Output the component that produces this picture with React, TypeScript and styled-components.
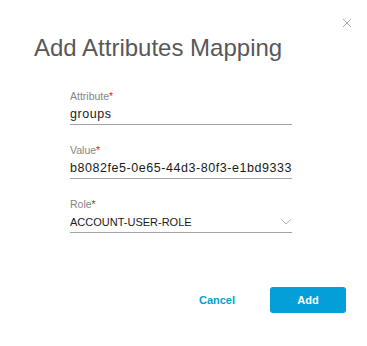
import { FC } from 'react'

import { createGlobalStyle, styled } from 'styled-components'

const GlobalStyle = createGlobalStyle`
  html, body {
    margin: 0;
    padding: 0;
    background: #fff;
  }

  body {
    font-family: 'Liberation Sans', Arial, sans-serif;
  }
`

type FieldProps = {
  label: string
  value: string
  select?: boolean
}

const Field: FC<FieldProps> = ({ label, value, select }) => {
  return (
    <StyledField>
      <StyledLabel>
        {label}
        <StyledRequired>*</StyledRequired>
      </StyledLabel>

      <StyledControl>
        <StyledInput value={value} readOnly $caps={select} />
        {select && (
          <StyledChevron viewBox="0 0 10 6" aria-hidden="true">
            <polyline points="0.5,0.5 5,5 9.5,0.5" />
          </StyledChevron>
        )}
      </StyledControl>
    </StyledField>
  )
}

const App: FC = () => {
  return (
    <>
      <GlobalStyle />
      <StyledDialog>
        <StyledClose type="button" aria-label="Close">
          <svg viewBox="0 0 8 8" width="8" height="8">
            <path d="M0 0 L8 8 M8 0 L0 8" />
          </svg>
        </StyledClose>

        <StyledTitle>Add Attributes Mapping</StyledTitle>

        <StyledForm>
          <Field label="Attribute" value="groups" />
          <Field label="Value" value="b8082fe5-0e65-44d3-80f3-e1bd93330e5a" />
          <Field label="Role" value="ACCOUNT-USER-ROLE" select />
        </StyledForm>

        <StyledFooter>
          <StyledButton type="button">Cancel</StyledButton>
          <StyledButton type="button" $primary>
            Add
          </StyledButton>
        </StyledFooter>
      </StyledDialog>
    </>
  )
}

export default App

const StyledDialog = styled.div`
  position: relative;
  box-sizing: border-box;
  width: 367px;
  height: 346px;
  padding: 34px 21px 0 34px;
  background: #fff;
`

const StyledClose = styled.button`
  position: absolute;
  top: 19px;
  right: 16px;
  display: flex;
  padding: 0;
  border: none;
  background: none;
  cursor: pointer;

  svg {
    stroke: #a8a8a8;
    stroke-width: 1;
    fill: none;
  }
`

const StyledTitle = styled.h1`
  margin: 0;
  font-size: 24px;
  line-height: 28px;
  font-weight: 400;
  color: #58585a;
`

const StyledForm = styled.div`
  display: flex;
  flex-direction: column;
  gap: 19px;
  width: 222px;
  margin: 28px 0 0 36px;
`

const StyledField = styled.div`
  display: flex;
  flex-direction: column;
  gap: 3px;
  border-bottom: 1px solid #a4a4a4;
  padding-bottom: 2px;
`

const StyledLabel = styled.label`
  font-size: 10.5px;
  line-height: 13px;
  color: #858585;
`

const StyledRequired = styled.span`
  color: #e2231a;
`

const StyledControl = styled.div`
  display: flex;
  align-items: center;
  gap: 8px;
`

const StyledInput = styled.input<{ $caps?: boolean }>`
  flex: 1;
  min-width: 0;
  padding: 0;
  border: none;
  outline: none;
  background: none;
  font-family: 'Liberation Sans', Arial, sans-serif;
  font-size: ${({ $caps }) => ($caps ? '11px' : '12.5px')};
  line-height: 16px;
  height: 16px;
  letter-spacing: ${({ $caps }) => ($caps ? '0' : '0.55px')};
  color: #1a1a1a;
`

const StyledChevron = styled.svg`
  width: 10px;
  height: 6px;
  flex: none;
  margin-right: 1px;
  fill: none;
  stroke: #b0b0b0;
  stroke-width: 1;
`

const StyledFooter = styled.div`
  display: flex;
  justify-content: flex-end;
  gap: 15px;
  margin-top: 54px;
`

const StyledButton = styled.button<{ $primary?: boolean }>`
  width: 76px;
  height: 26px;
  padding: 0;
  border: none;
  border-radius: 3px;
  font-family: 'Liberation Sans', Arial, sans-serif;
  font-size: 11px;
  font-weight: 700;
  color: ${({ $primary }) => ($primary ? '#fff' : '#049fd9')};
  background: ${({ $primary }) => ($primary ? '#049fd9' : 'transparent')};
  cursor: pointer;
`
